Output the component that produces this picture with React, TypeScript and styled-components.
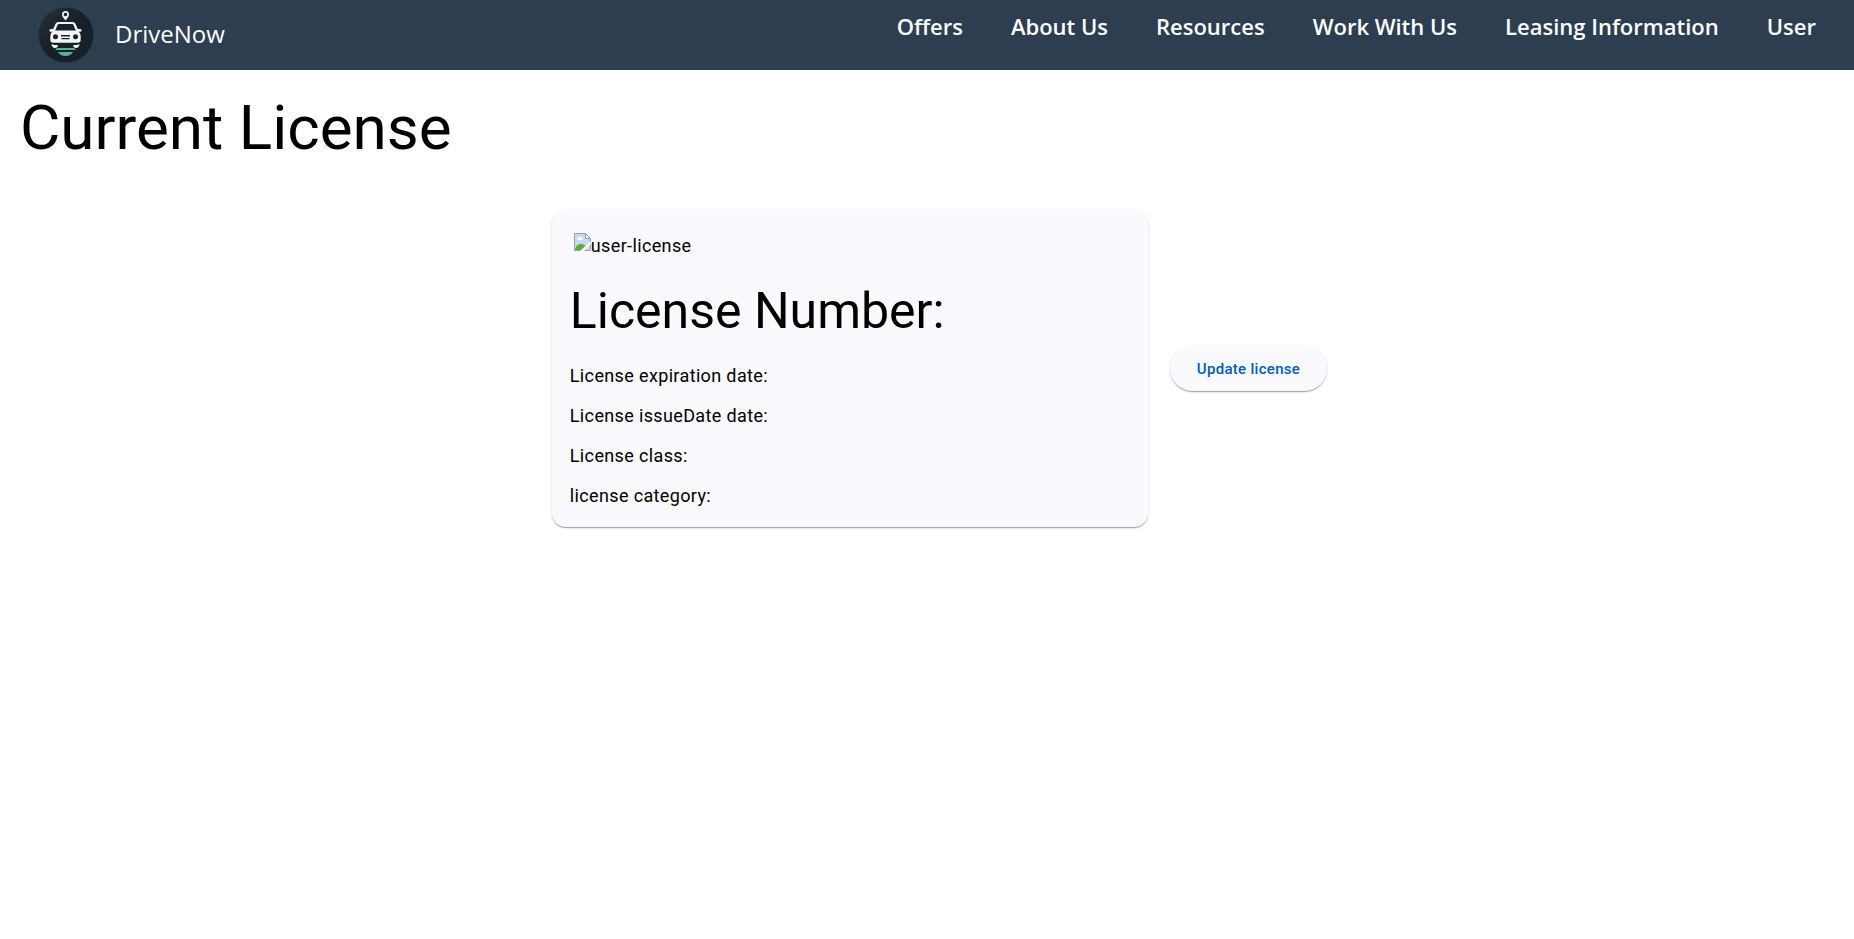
import React from "react";
import styled, { createGlobalStyle } from "styled-components";

const GlobalStyle = createGlobalStyle`
  *, *::before, *::after { box-sizing: border-box; }
  body {
    margin: 0;
    background: #ffffff;
    color: #000000;
    font-family: Roboto, "Liberation Sans", sans-serif;
    font-size: 18px;
    line-height: 22px;
  }
`;

const elevation = `
  0 2px 1px -1px rgba(0, 0, 0, 0.2),
  0 1px 1px 0 rgba(0, 0, 0, 0.14),
  0 1px 3px 0 rgba(0, 0, 0, 0.12)
`;

const Header = styled.header`
  display: flex;
  justify-content: space-between;
  min-height: 70px;
  padding: 0 38px;
  background: #2c3e50;
  color: #ffffff;
  font-family: "Open Sans", "Noto Sans", sans-serif;
`;

const Brand = styled.a`
  display: flex;
  align-items: center;
  gap: 21px;
  color: inherit;
  font-size: 24px;
  line-height: 32px;
  text-decoration: none;
`;

const BrandName = styled.span`
  padding-bottom: 2px;
`;

const NavList = styled.ul`
  display: flex;
  gap: 48px;
  margin: 0;
  padding: 11px 0 0;
  list-style: none;
`;

const NavLink = styled.a`
  color: inherit;
  font-size: 22px;
  font-weight: 600;
  line-height: 30px;
  text-decoration: none;
  white-space: nowrap;
`;

const PageTitle = styled.h1`
  margin: 22px 20px 0;
  font-size: 62px;
  font-weight: 400;
  line-height: 72px;
`;

const Content = styled.main`
  display: flex;
  justify-content: center;
  align-items: center;
  gap: 22px;
  margin-top: 46px;
  padding: 0 24px 24px 49px;
`;

const Card = styled.section`
  flex: 0 1 596px;
  min-width: 0;
  padding: 18px 18px 20px;
  border-radius: 14px;
  background: #faf9fd;
  box-shadow: ${elevation};
  letter-spacing: 0.02em;
`;

const Photo = styled.div`
  display: flex;
  align-items: flex-start;
  padding: 5px 4px 4px;
`;

const PhotoLabel = styled.span`
  padding-top: 2px;
`;

const CardTitle = styled.h2`
  margin: 22px 0 26px;
  font-size: 50px;
  font-weight: 400;
  line-height: 56px;
  letter-spacing: normal;
`;

const Detail = styled.p`
  margin: 18px 0 0;
`;

const UpdateButton = styled.button`
  height: 45px;
  padding: 0 27px;
  border: 0;
  border-radius: 23px;
  background: #faf9fd;
  box-shadow: ${elevation};
  color: #005cbb;
  font-family: inherit;
  font-size: 15px;
  font-weight: 500;
  line-height: 22px;
  letter-spacing: 0.02em;
  white-space: nowrap;
  cursor: pointer;
`;

const Logo = () => (
  <svg width="56" height="56" viewBox="0 0 56 56" aria-hidden="true">
    <defs>
      <linearGradient id="disc" x1="0" y1="0" x2="1" y2="1">
        <stop offset="0" stopColor="#26323b" />
        <stop offset="0.5" stopColor="#171f28" />
        <stop offset="1" stopColor="#18222c" />
      </linearGradient>
    </defs>
    <circle cx="28" cy="28" r="27.5" fill="url(#disc)" />
    <path d="M27.500 13.500c-1.400-1.800-3.500-3.800-3.500-6a3.500 3.500 0 0 1 7 0c0 2.200-2.100 4.200-3.500 6z" fill="#f2f5f3" />
    <circle cx="27.500" cy="7.500" r="1.800" fill="#1a222b" />
    <path
      d="M20.500 15h14c1.500 0 2.500.7 3 2l2.300 5h2.400a1.300 1.300 0 0 1 0 2.800h-1.500c1.400 1.300 2 3 2 5v3c0 2-1 3-3 3H15.300c-2 0-3-1-3-3v-3c0-2 .6-3.700 2-5h-1.500a1.300 1.300 0 0 1 0-2.800h2.400l2.300-5c.5-1.300 1.500-2 3-2z"
      fill="#f2f5f3"
    />
    <path d="M21 17h13c.9 0 1.300.4 1.600 1.200l2.200 5.300H17.200l2.200-5.300c.3-.8.700-1.200 1.600-1.200z" fill="#1a222b" />
    <circle cx="17.500" cy="29.800" r="2.500" fill="#1a222b" />
    <circle cx="37.500" cy="29.800" r="2.500" fill="#1a222b" />
    <path d="M23 28h9v1.600h-9zM23.500 31h8v1.300h-8z" fill="#1a222b" />
    <path d="M13.500 37c1.500 1 4 1 6.500 1.300-.3 1.800-1.200 2.700-3 2.700-2 0-3.200-1.300-3.500-4zM41.500 37c-1.500 1-4 1-6.500 1.300.3 1.800 1.200 2.700 3 2.700 2 0 3.200-1.300 3.500-4z" fill="#f2f5f3" />
    <path d="M19 41h17l2 2H17zM20 45h15c-1.500 2.700-4.300 4-7.500 4s-6-1.300-7.500-4z" fill="#58b09c" />
  </svg>
);

const MissingImageIcon = () => (
  <svg width="17" height="18" viewBox="0 0 17 18" aria-hidden="true">
    <path d="M.5.500h11l5 5v12H.5z" fill="#c7d9f5" stroke="#a0a0a0" />
    <path d="M3 6a1.500 1.500 0 0 1 1.500-1.500 2 2 0 0 1 3.500.5 1.300 1.300 0 0 1 .5 2H3.500z" fill="#ffffff" />
    <path d="M1 17c.5-4 3-6 6-6 2 0 4 1 5 2.500L7 17z" fill="#58ad3a" />
    <path d="M11.500.500v5h5z" fill="#ffffff" stroke="#a0a0a0" />
    <path d="M17 8v3l-7 7H6z" fill="#ffffff" />
  </svg>
);

const links = ["Offers", "About Us", "Resources", "Work With Us", "Leasing Information", "User"];

const details = [
  "License expiration date:",
  "License issueDate date:",
  "License class:",
  "license category:",
];

export default function App() {
  return (
    <>
      <GlobalStyle />
      <Header>
        <Brand href="#">
          <Logo />
          <BrandName>DriveNow</BrandName>
        </Brand>
        <nav>
          <NavList>
            {links.map((link) => (
              <li key={link}>
                <NavLink href="#">{link}</NavLink>
              </li>
            ))}
          </NavList>
        </nav>
      </Header>
      <PageTitle>Current License</PageTitle>
      <Content>
        <Card>
          <Photo>
            <MissingImageIcon />
            <PhotoLabel>user-license</PhotoLabel>
          </Photo>
          <CardTitle>License Number:</CardTitle>
          {details.map((detail) => (
            <Detail key={detail}>{detail}</Detail>
          ))}
        </Card>
        <UpdateButton type="button">Update license</UpdateButton>
      </Content>
    </>
  );
}
